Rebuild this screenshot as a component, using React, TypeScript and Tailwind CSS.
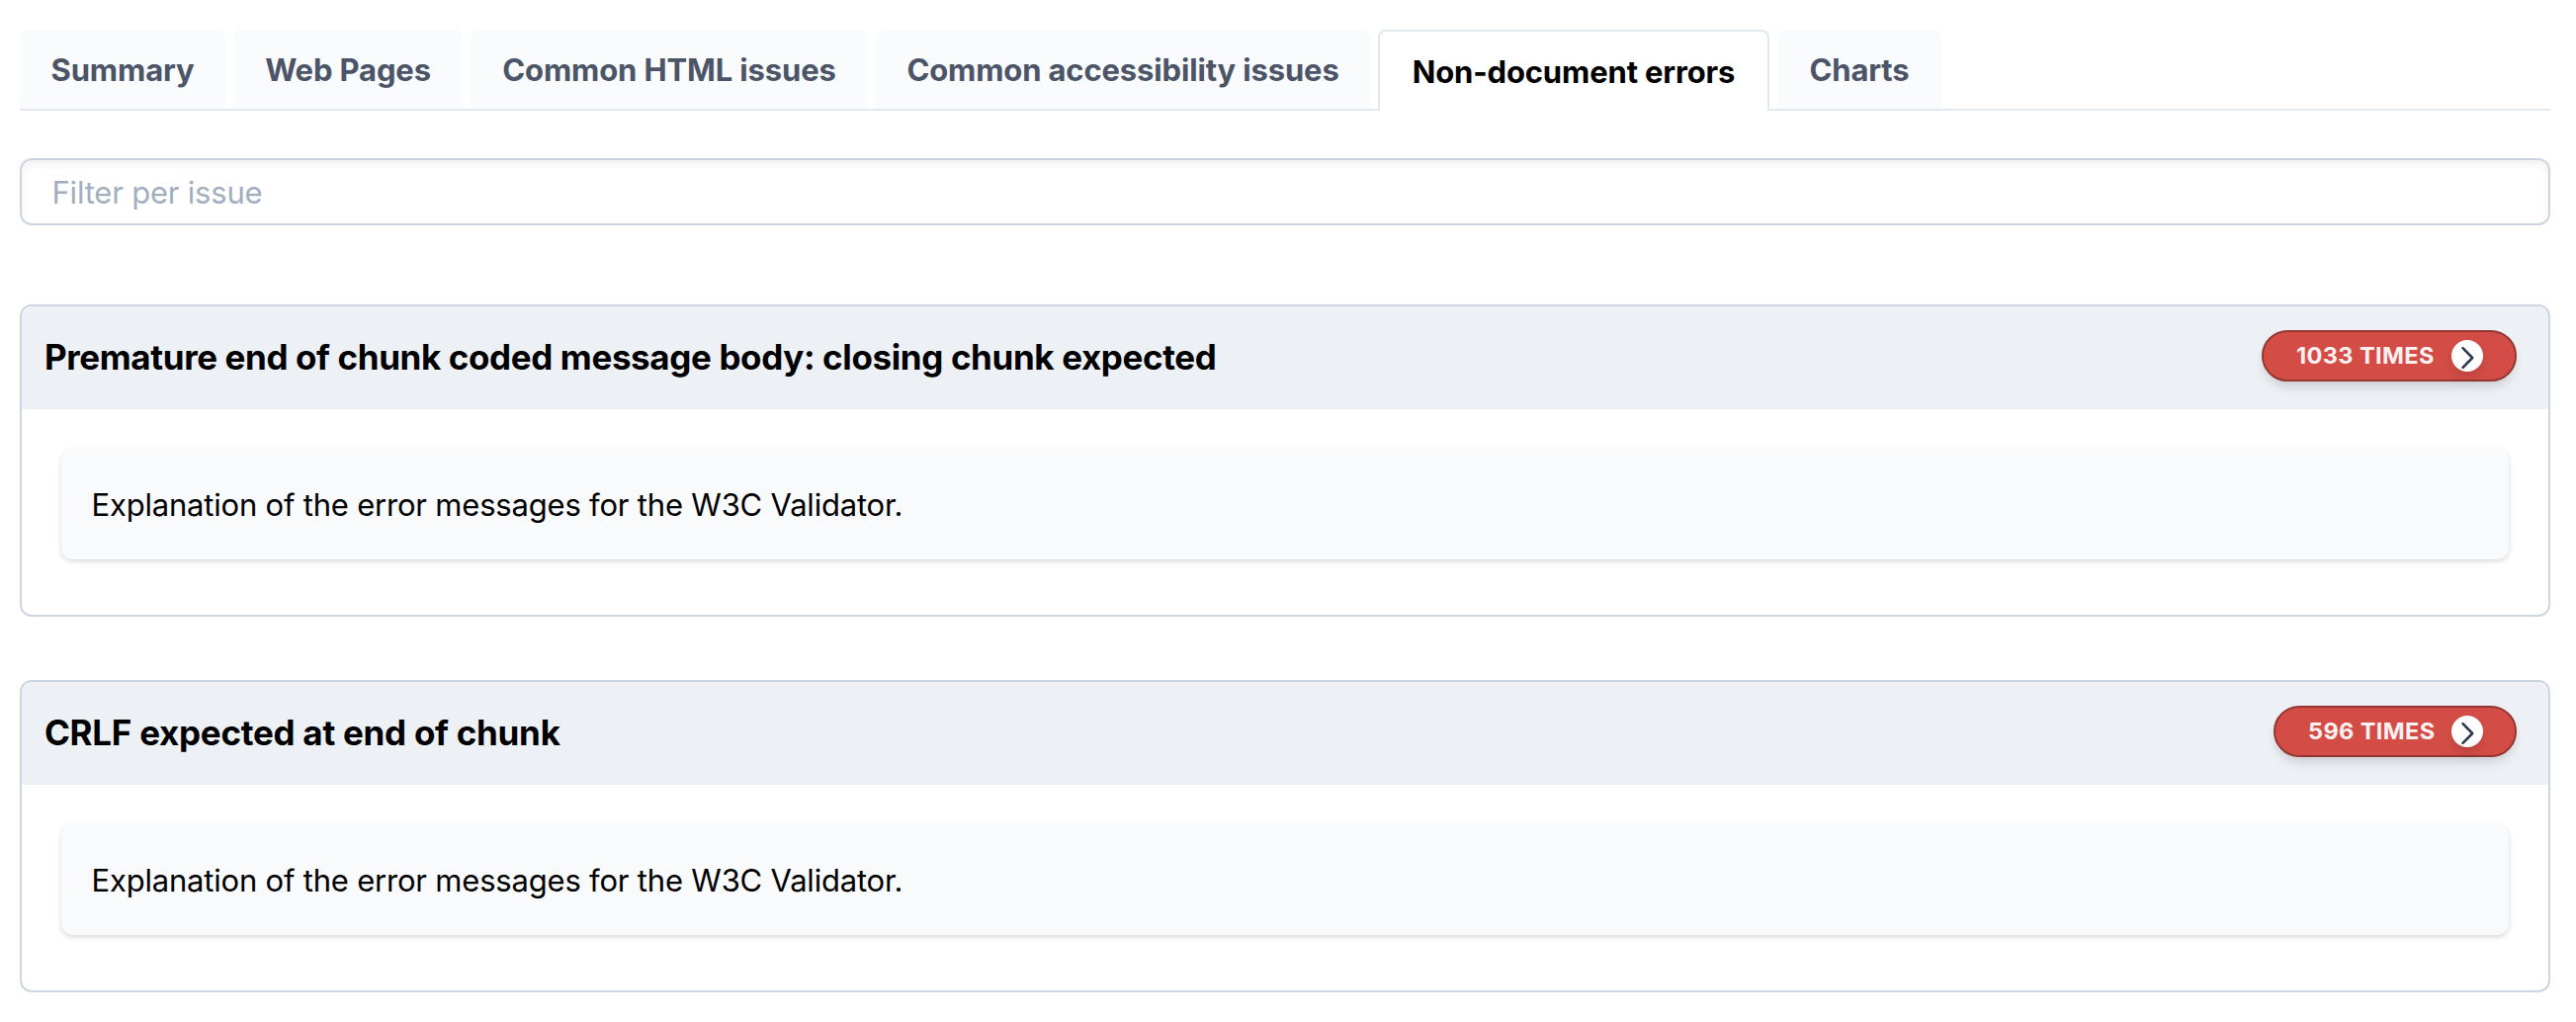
type Tab = { label: string; width: string; active?: boolean };
type Issue = { title: string; count: number; width: string; tracking: string };

const tabs: Tab[] = [
  { label: "Summary", width: "w-[208px]" },
  { label: "Web Pages", width: "w-[232px]" },
  { label: "Common HTML issues", width: "w-[402px]" },
  { label: "Common accessibility issues", width: "w-[500px]" },
  { label: "Non-document errors", width: "w-[396px]", active: true },
  { label: "Charts", width: "w-[166px]" },
];

const issues: Issue[] = [
  {
    title: "Premature end of chunk coded message body: closing chunk expected",
    count: 1033,
    width: "w-[258px]",
    tracking: "tracking-[-0.38px]",
  },
  {
    title: "CRLF expected at end of chunk",
    count: 596,
    width: "w-[246px]",
    tracking: "tracking-[-0.27px]",
  },
];

function TabBar() {
  return (
    <div className="flex h-[82px] gap-2 border-b-2 border-[#e2e8ee]">
      {tabs.map((tab) => (
        <button
          key={tab.label}
          className={
            (tab.active
              ? "h-[82px] border-2 border-b-0 border-[#e2e8ee] bg-white pt-4 text-black "
              : "h-20 bg-[#fafbfd] pt-4 text-[#4c5567] ") +
            "flex shrink-0 justify-center rounded-t-lg text-[31px] font-bold leading-[50px] tracking-[-0.15px] whitespace-nowrap " +
            tab.width
          }
        >
          {tab.label}
        </button>
      ))}
    </div>
  );
}

function CountButton({ count, width }: { count: number; width: string }) {
  return (
    <button
      className={
        "flex h-[52px] shrink-0 items-center justify-between rounded-full border-2 border-[#943632] bg-[#d34d46] pr-8 pl-[33px] shadow-[0_8px_12px_-2px_rgba(0,0,0,0.1),0_4px_8px_-2px_rgba(0,0,0,0.06)] " +
        width
      }
    >
      <span className="text-[23.5px] font-bold leading-none tracking-[0.4px] whitespace-nowrap text-[#fff1f1]">
        {count} TIMES
      </span>
      <span className="block size-8 rounded-full bg-white shadow-[0_8px_12px_-2px_rgba(0,0,0,0.1),0_4px_8px_-2px_rgba(0,0,0,0.06)]">
        <svg viewBox="0 0 32 32" className="size-8" fill="none">
          <path
            d="M11.5 8.2 21.2 18 11.5 27.8"
            stroke="#2d3748"
            strokeWidth="2.5"
            strokeLinecap="round"
            strokeLinejoin="round"
          />
        </svg>
      </span>
    </button>
  );
}

function IssueCard({ issue }: { issue: Issue }) {
  return (
    <section className="h-[316px] rounded-[12px] border-2 border-[#cdd6e0] bg-white">
      <header className="flex h-[104px] items-center justify-between rounded-t-[12px] bg-[#edf0f5] pr-8 pb-1 pl-[23px]">
        <h2 className={"pt-0.5 text-[35px] font-bold leading-[54px] whitespace-nowrap text-black " + issue.tracking}>
          {issue.title}
        </h2>
        <CountButton count={issue.count} width={issue.width} />
      </header>
      <div className="px-10 pt-10">
        <p className="flex h-28 items-center rounded-[12px] bg-[#f9fafc] pt-px pl-[30.5px] text-[31px] leading-[48px] tracking-[-0.2px] text-black shadow-[0_2px_6px_0_rgba(0,0,0,0.1),0_2px_4px_0_rgba(0,0,0,0.06)]">
          Explanation of the error messages for the W3C Validator.
        </p>
      </div>
    </section>
  );
}

export default function App() {
  return (
    <main className="h-[1034px] w-[2606px] overflow-hidden bg-white pt-[30px] pr-[26px] pl-5 font-['Inter',sans-serif]">
      <TabBar />
      <input
        type="text"
        placeholder="Filter per issue"
        className="mt-12 block h-[68px] w-full rounded-[12px] border-2 border-[#cdd6e0] bg-white pl-[30.5px] text-[31px] tracking-[-0.2px] shadow-[inset_0_4px_8px_0_rgba(0,0,0,0.06)] outline-none placeholder:text-[#a2aec0]"
      />
      <div className="mt-20 flex flex-col gap-16">
        {issues.map((issue) => (
          <IssueCard key={issue.title} issue={issue} />
        ))}
      </div>
    </main>
  );
}
